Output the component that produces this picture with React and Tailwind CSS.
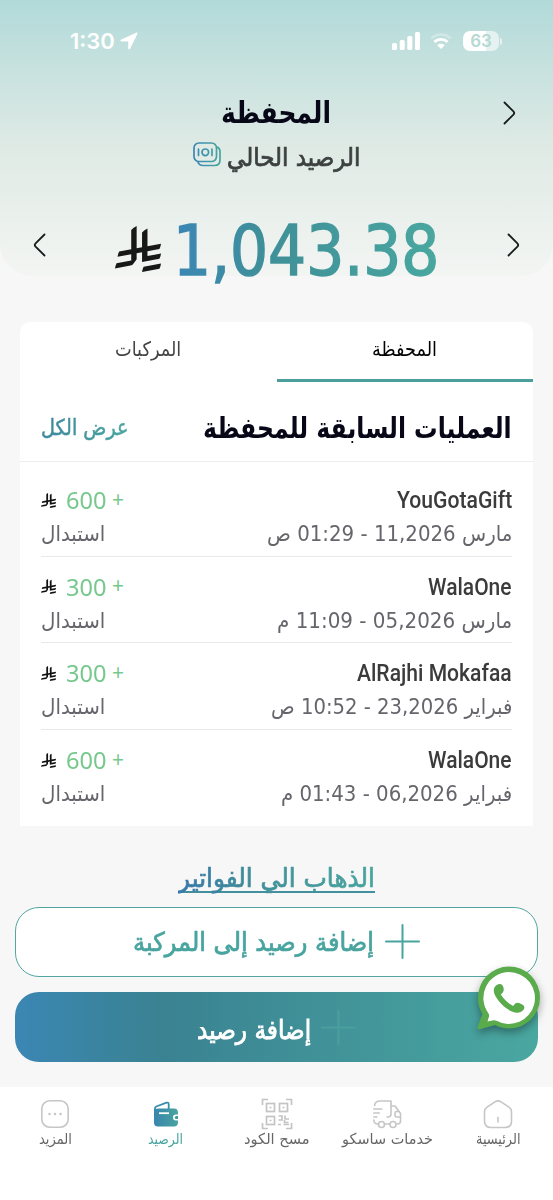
import React, { useLayoutEffect, useRef, useState } from "react";
import clsx from "clsx";

const transactions = [
  { id: 1, name: "YouGotaGift", nameWidth: "w-[115px]", date: "مارس 11,2026 - 01:29 ص", dateWidth: "w-[245px]", amount: "600" },
  { id: 2, name: "WalaOne", nameWidth: "w-[84px]", date: "مارس 05,2026 - 11:09 م", dateWidth: "w-[235px]", amount: "300" },
  { id: 3, name: "AlRajhi Mokafaa", nameWidth: "w-[155px]", date: "فبراير 23,2026 - 10:52 ص", dateWidth: "w-[241px]", amount: "300" },
  { id: 4, name: "WalaOne", nameWidth: "w-[84px]", date: "فبراير 06,2026 - 01:43 م", dateWidth: "w-[231px]", amount: "600" }
];

// One line of text, squeezed or stretched to the width of its box
const Fit = ({ className, textClassName, children, ltr = false }) => {
  const textRef = useRef(null);
  const [scale, setScale] = useState(1);

  useLayoutEffect(() => {
    const text = textRef.current;
    setScale(text.parentElement.clientWidth / text.offsetWidth);
  }, []);

  return (
    <div className={clsx("flex shrink-0 whitespace-nowrap", className)} dir={ltr ? "ltr" : "rtl"}>
      <span
        ref={textRef}
        className={clsx("block shrink-0", ltr ? "origin-left" : "origin-right", textClassName)}
        style={{ transform: `scaleX(${scale})` }}
      >
        {children}
      </span>
    </div>
  );
};

const RiyalSign = ({ className }) => (
  <svg viewBox="0 0 1124.14 1256.39" preserveAspectRatio="none" fill="currentColor" className={className}>
    <path d="M699.62,1113.02h0c-20.06,44.48-33.32,92.75-38.4,143.37l424.51-90.24c20.06-44.47,33.31-92.75,38.4-143.37l-424.51,90.24Z" />
    <path d="M1085.73,895.8c20.06-44.47,33.32-92.75,38.4-143.37l-330.68,70.33v-135.2l292.27-62.11c20.06-44.47,33.32-92.75,38.4-143.37l-330.68,70.27V66.13c-50.67,28.45-95.67,66.32-132.25,110.99v403.35l-132.25,28.11V0c-50.67,28.44-95.67,66.32-132.25,110.99v525.69l-295.91,62.88c-20.06,44.47-33.33,92.75-38.42,143.37l334.33-71.05v170.26l-358.3,76.14c-20.06,44.47-33.32,92.75-38.4,143.37l375.04-79.7c30.53-6.35,56.77-24.4,73.83-49.24l68.78-101.97v-.02c7.14-10.55,11.3-23.27,11.3-36.97v-149.98l132.25-28.11v270.4l424.53-90.28Z" />
  </svg>
);

const Chevron = ({ left = false }) => (
  <svg viewBox="0 0 13 24" fill="none" stroke="#171b1d" strokeWidth="1.8" strokeLinecap="round" className={clsx("h-6 w-[13px]", left && "rotate-180")}>
    <path d="M1.5 1.5 10.4 10.3Q12 12 10.4 13.7L1.5 22.5" />
  </svg>
);

const Plus = ({ className }) => (
  <svg viewBox="0 0 35 35" fill="none" stroke="currentColor" strokeWidth="2" strokeLinecap="round" className={className}>
    <path d="M17.5 1v33M1 17.5h33" />
  </svg>
);

const StatusBar = () => (
  <div dir="ltr" className="flex h-[82px] items-center justify-between pl-[70px] pr-[51px] text-white">
    <div className="flex items-center gap-[5px]">
      <Fit ltr className="w-[45px] font-[Inter,sans-serif] text-[22px] font-semibold leading-6">1:30</Fit>
      <svg viewBox="0 0 18 18" fill="currentColor" className="size-[18px]">
        <path d="M16.2.7 1.2 7.6c-1.2.6-.9 1.9.4 1.9h6.6v6.8c0 1.3 1.3 1.6 1.9.4L17.4 1.9C17.8.9 17.1.3 16.2.7Z" />
      </svg>
    </div>
    <div className="flex items-center">
      <svg viewBox="0 0 28 18" fill="currentColor" className="h-[18px] w-7">
        <rect x="0" y="11" width="5" height="7" rx="1.5" />
        <rect x="7.7" y="8" width="5" height="10" rx="1.5" />
        <rect x="15.3" y="4" width="5" height="14" rx="1.5" />
        <rect x="23" y="0" width="5" height="18" rx="1.5" />
      </svg>
      <svg viewBox="0 0 22 17" fill="none" stroke="currentColor" className="ml-[10px] h-[17px] w-[22px]">
        <path d="M1.3 5.4a14 14 0 0 1 19.4 0" strokeWidth="2.7" opacity=".3" />
        <path d="M4.4 9.1a9.4 9.4 0 0 1 13.2 0" strokeWidth="2.8" />
        <path d="M7.3 12.2a5.4 5.4 0 0 1 7.4 0L11 16Z" fill="currentColor" stroke="none" />
      </svg>
      <div className="ml-[11px] flex h-5 w-9 items-center justify-center rounded-[7px] bg-linear-to-r from-white from-65% to-white/60 to-65%">
        <span className="font-[Inter,sans-serif] text-[17px] font-semibold leading-5 text-[#b7d9d2]">63</span>
      </div>
      <div className="ml-px h-[7px] w-[2px] rounded-r-full bg-white/60" />
    </div>
  </div>
);

const CashIcon = () => (
  <svg viewBox="0 0 28 25" fill="none" stroke="url(#cash)" strokeWidth="1.7" strokeLinecap="round" className="h-[25px] w-7">
    <defs>
      <linearGradient id="cash" gradientUnits="userSpaceOnUse" x1="0" y1="0" x2="28" y2="0">
        <stop stopColor="#3b86b4" />
        <stop offset="1" stopColor="#49a69f" />
      </linearGradient>
    </defs>
    <rect x="1" y="1" width="22.5" height="18.5" rx="5" />
    <path d="M24 5c2 .8 3 2.3 3 4.6V18c0 3.500-2 5.500-5.500 5.500H10c-2.700 0-4.300-1.100-5-3.500" />
    <circle cx="12.3" cy="10.3" r="3.3" />
    <path d="M5.500 7v6.500M19 7v6.500" />
  </svg>
);

const WhatsAppButton = () => (
  <svg viewBox="0 0 64 66" className="absolute left-[477px] top-[966px] h-[66px] w-16 drop-shadow-[0_4px_4px_rgba(0,0,0,0.35)]">
    <path d="M32 .5a31 31 0 0 1 0 62c-5 0-10-1.300-14-3.500L3 63.200c-1.800.5-3-.8-2.400-2.500L5.500 48C2.500 43.500 1 37.500 1 32A31 31 0 0 1 32 .5Z" fill="#59ab4b" />
    <path d="M32 6a26 26 0 1 1-12.500 48.800Q18 54 16.500 54.300L10.500 55.500 12 50.500Q12.500 49 11.500 47.500A26 26 0 0 1 32 6Z" fill="#fff" />
    <path d="M21.300 18.300c2.300-.9 4.300.3 5 2.600.8 2.400.6 4.300-1 6l-1.500 1.500c3.300 5 7 8.500 12.400 11.500l1.800-2.100c1.300-1.400 3-1.400 4.700-.6 3 1.300 4.800 2.300 4.700 4.400-.2 2.900-3.800 5.400-7.500 5.100C30 46.400 15.700 31 16.800 23.500c.4-2.600 2.200-4.400 4.500-5.200Z" fill="#59ab4b" />
  </svg>
);

const HomeIcon = () => (
  <svg viewBox="0 0 30 30" fill="none" stroke="#c6c6c6" strokeWidth="1.6" strokeLinecap="round" className="size-[30px]">
    <path d="M4 8.200 12 2.900q3-2 6 0l8 5.300q2.500 1.700 2.500 4.600V22q0 6.500-6.500 6.500H8Q1.500 28.500 1.500 22v-9.200Q1.500 9.900 4 8.200Z" />
    <path d="M15 18.500v4.500" />
  </svg>
);

const TruckIcon = () => (
  <svg viewBox="0 0 30 30" fill="none" stroke="#c6c6c6" strokeWidth="1.6" strokeLinecap="round" strokeLinejoin="round" className="size-[30px]">
    <path d="M2.500 6.500C3 3.500 5 2 8 2h11v13c0 2-1.200 3-3 3h-1M19 7h4l5.500 7.500V22c0 2-1 3-3 3h-1M5.500 25C3 25 2 23.500 1.800 21M12.500 25h5" />
    <path d="M27 12.500h-2.500c-1 0-1.500.5-1.500 1.500v2.500c0 1 .5 1.500 1.500 1.500h4M1.800 10h8M1.800 14h5.500M1.800 18h3" />
    <circle cx="9.500" cy="25.500" r="3" />
    <circle cx="21" cy="25.500" r="3" />
  </svg>
);

const ScanIcon = () => (
  <svg viewBox="0 0 32 32" fill="none" stroke="#c4c4c4" strokeWidth="1.7" className="size-8">
    <path d="M1.500 7V1.500H7M25 1.500h5.500V7M30.500 25v5.500H25M7 30.500H1.500V25" />
    <rect x="5.500" y="5.500" width="8" height="8" />
    <rect x="18.500" y="5.500" width="8" height="8" />
    <rect x="5.500" y="18.500" width="8" height="8" />
    <path d="M8.500 9.500h2M21.500 9.500h2M8.500 22.500h2M17.500 18h3.500v4h-3.500M24 17.500v3.500h4M17 26.500h3M22.500 26.500h5.500M23.500 22v2.500h4" />
  </svg>
);

const WalletIcon = () => (
  <svg viewBox="0 0 26 28" className="h-7 w-[26px]">
    <defs>
      <linearGradient id="wallet" x1="0" y1="0" x2="1" y2="0">
        <stop stopColor="#3985ad" />
        <stop offset="1" stopColor="#48a49f" />
      </linearGradient>
    </defs>
    <path d="M2 10.500V8.400Q2 7 3.300 6.500L13.500 2.700q2.200-.7 2.200 1.500v5" fill="none" stroke="#398caa" strokeWidth="1.8" />
    <path d="M1 9.500 5 8.500h16c2.500 0 4 1.300 4 4v2h-2a3 3 0 0 0 0 6h2v2c0 2.700-1.500 4-4 4H5c-2.700 0-4-1.500-4-4v-13Z" fill="url(#wallet)" />
    <path d="M25 16h-1.700a1.500 1.500 0 0 0 0 3H25Z" fill="#43999f" />
    <path d="M6 13.200h10" stroke="#fff" strokeWidth="1.8" />
  </svg>
);

const MoreIcon = () => (
  <svg viewBox="0 0 30 30" fill="none" stroke="#c6c6c6" strokeWidth="1.6" className="size-[30px]">
    <rect x="1.8" y="1.8" width="26.4" height="26.4" rx="8" />
    <path d="M9.500 15h.1M15 15h.1M20.500 15h.1" strokeWidth="2.4" strokeLinecap="round" />
  </svg>
);

const navItems = [
  { label: "الرئيسية", width: "w-[45px]", icon: HomeIcon },
  { label: "خدمات ساسكو", width: "w-[91px]", icon: TruckIcon },
  { label: "مسح الكود", width: "w-[66px]", icon: ScanIcon },
  { label: "الرصيد", width: "w-[35px]", icon: WalletIcon, active: true },
  { label: "المزيد", width: "w-[33px]", icon: MoreIcon }
];

const App = () => {
  return (
    <div dir="rtl" className="relative flex h-[1200px] w-[553px] flex-col overflow-hidden bg-[#f7f7f7] font-['DejaVu_Sans_Condensed','DejaVu_Sans',sans-serif]">
      <header className="h-[276px] shrink-0 rounded-b-[32px] bg-linear-to-b from-[#b1dad9] via-[#dfeae5] via-53% to-[#f3f5f3]">
        <StatusBar />
        <div className="grid h-[61px] grid-cols-[60px_1fr_60px] items-center">
          <div className="pr-[37px]">
            <Chevron />
          </div>
          <div className="flex justify-center">
            <Fit className="w-[110px]" textClassName="text-[30px] font-bold leading-[46px] text-[#070718]">المحفظة</Fit>
          </div>
        </div>
        <div className="flex h-[30px] items-center justify-center gap-[7px]">
          <Fit className="w-[133px]" textClassName="text-[25px] leading-[30px] text-[#3c4040] [-webkit-text-stroke:0.7px_#3c4040]">الرصيد الحالي</Fit>
          <div className="-mt-[8px]"><CashIcon /></div>
        </div>
        <div dir="ltr" className="flex h-[103px] items-center justify-between px-[33px] pt-[41px]">
          <Chevron left />
          <div className="flex items-center gap-[12px] pt-[8px]">
            <RiyalSign className="h-[46px] w-[46px] text-[#181818]" />
            <Fit ltr className="w-[266px] pt-[4px]" textClassName="bg-linear-to-r from-[#3b86b5] via-[#3f8f98] via-35% to-[#49a79f] bg-clip-text text-[70px] leading-[82px] text-transparent [-webkit-text-stroke:1.5px_transparent]">1,043.38</Fit>
          </div>
          <Chevron />
        </div>
      </header>

      <main className="mx-5 mt-[46px] h-[504px] shrink-0 rounded-t-[10px] bg-white">
        <div className="grid h-[60px] grid-cols-2">
          <div className="flex justify-center border-b-[3px] border-[#4a9f9c] pt-[9px]">
            <Fit className="w-[65px]" textClassName="text-[20px] leading-[36px] text-black">المحفظة</Fit>
          </div>
          <div className="flex justify-center pt-[9px]">
            <Fit className="w-[66px]" textClassName="text-[20px] leading-[36px] text-[#444]">المركبات</Fit>
          </div>
        </div>
        <div className="flex h-[80px] items-center justify-between border-b-[1.5px] border-[#ededed] px-[21px] pt-[12px]">
          <Fit className="w-[309px]" textClassName="text-[29px] font-bold leading-10 text-[#070718]">العمليات السابقة للمحفظة</Fit>
          <Fit className="w-[87px]" textClassName="bg-linear-to-r from-[#3d879d] to-[#49a59f] bg-clip-text text-[22px] leading-10 text-transparent [-webkit-text-stroke:0.5px_transparent]">عرض الكل</Fit>
        </div>
        <div className="px-[21px] pt-[8px]">
          {transactions.map((item) => (
            <div key={item.id} className="flex h-[86.7px] justify-between border-b border-[#e9e9e9] pt-[13px] last:border-b-0">
              <div>
                <Fit ltr className={clsx("ml-auto mr-0 h-[34px]", item.nameWidth)} textClassName="font-[Roboto,sans-serif] text-[23px] font-medium leading-[36px] text-[#3b3b3b]">{item.name}</Fit>
                <Fit className={item.dateWidth} textClassName="text-[21px] leading-[34px] text-[#65656b]">{item.date}</Fit>
              </div>
              <div dir="ltr" className="w-[84px]">
                <div className="flex h-[34px] items-center text-[#76c88d]">
                  <RiyalSign className="h-[15px] w-[15px] text-[#111]" />
                  <Fit ltr className="ml-[10px] w-[40px]" textClassName="font-['Noto_Sans',sans-serif] text-[23px] font-normal leading-[34px]">{item.amount}</Fit>
                  <span className="mb-[3px] ml-[6px] font-['Noto_Sans',sans-serif] text-[21px] leading-[30px]">+</span>
                </div>
                <Fit className="w-[64px]" textClassName="text-[21px] leading-[34px] text-[#65656b]">استبدال</Fit>
              </div>
            </div>
          ))}
        </div>
      </main>

      <div className="mt-[38px] flex h-[43px] shrink-0 items-start justify-center">
        <Fit className="h-[29px] w-[197px] border-b-2 border-[#438f9e]" textClassName="h-[40px] bg-linear-to-r from-[#3a77ac] via-[#408c98] via-35% to-[#49a59f] bg-clip-text text-[26px] leading-[29px] text-transparent [-webkit-text-stroke:0.7px_transparent]">الذهاب الي الفواتير</Fit>
      </div>

      <button className="mx-[15px] flex h-[70px] shrink-0 items-center justify-center gap-[11px] rounded-[24px] border-[1.5px] border-[#54a5a2] bg-white text-[#48a49f]">
        <Plus className="mb-[2px] size-[35px]" />
        <Fit className="w-[241px]" textClassName="text-[26px] leading-[38px] [-webkit-text-stroke:0.7px_#48a49f]">إضافة رصيد إلى المركبة</Fit>
      </button>
      <button className="mx-[15px] mt-[15px] flex h-[70px] shrink-0 items-center justify-center gap-[10px] rounded-[24px] bg-linear-to-r from-[#3b86b4] via-[#3a8292] via-28% to-[#4aa7a0] pt-[6px] text-white">
        <Plus className="mb-[6px] size-[35px] text-[#4a9f9e]" />
        <Fit className="w-[114px]" textClassName="text-[26px] leading-[40px] [-webkit-text-stroke:0.8px_white]">إضافة رصيد</Fit>
      </button>

      <nav className="mt-[25px] grid flex-1 grid-cols-5 bg-white pt-[10px]">
        {navItems.map(({ label, width, icon: Icon, active }) => (
          <div key={label} className="flex flex-col items-center">
            <div className="flex h-[33px] items-center"><Icon /></div>
            <Fit className={width} textClassName={clsx("text-[15px] leading-[18px]", active ? "text-[#48a49f]" : "text-[#666]")}>{label}</Fit>
          </div>
        ))}
      </nav>

      <WhatsAppButton />
    </div>
  );
};

export default App;
